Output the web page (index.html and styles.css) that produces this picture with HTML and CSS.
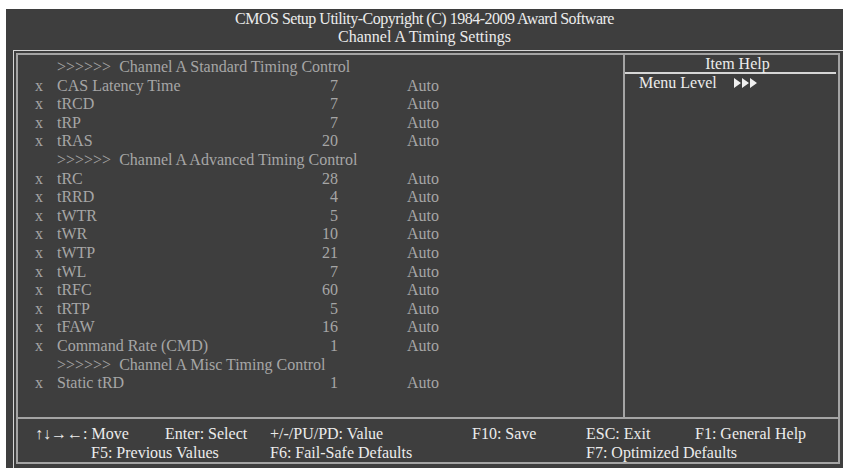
FILE: index.html
```html
<!DOCTYPE html>
<html lang="en">
<head>
    <meta charset="UTF-8">
    <title>Channel A Timing Settings</title>
    <link rel="stylesheet" href="styles.css">
</head>
<body>
    <div class="screen">
        <!-- Başlık -->
        <div class="title">
            <div class="copyright">CMOS Setup Utility-Copyright (C) 1984-2009 Award Software</div>
            <div>Channel A Timing Settings</div>
        </div>

        <div class="frame">
            <div class="box">
                <div class="main">
                    <div class="items">
                        <div class="group">&gt;&gt;&gt;&gt;&gt;&gt;  Channel A Standard Timing Control</div>
                        <span>x</span><span>CAS Latency Time</span><span class="val">7</span><span></span><span>Auto</span>
                        <span>x</span><span>tRCD</span><span class="val">7</span><span></span><span>Auto</span>
                        <span>x</span><span>tRP</span><span class="val">7</span><span></span><span>Auto</span>
                        <span>x</span><span>tRAS</span><span class="val">20</span><span></span><span>Auto</span>
                        <div class="group">&gt;&gt;&gt;&gt;&gt;&gt;  Channel A Advanced Timing Control</div>
                        <span>x</span><span>tRC</span><span class="val">28</span><span></span><span>Auto</span>
                        <span>x</span><span>tRRD</span><span class="val">4</span><span></span><span>Auto</span>
                        <span>x</span><span>tWTR</span><span class="val">5</span><span></span><span>Auto</span>
                        <span>x</span><span>tWR</span><span class="val">10</span><span></span><span>Auto</span>
                        <span>x</span><span>tWTP</span><span class="val">21</span><span></span><span>Auto</span>
                        <span>x</span><span>tWL</span><span class="val">7</span><span></span><span>Auto</span>
                        <span>x</span><span>tRFC</span><span class="val">60</span><span></span><span>Auto</span>
                        <span>x</span><span>tRTP</span><span class="val">5</span><span></span><span>Auto</span>
                        <span>x</span><span>tFAW</span><span class="val">16</span><span></span><span>Auto</span>
                        <span>x</span><span>Command Rate (CMD)</span><span class="val">1</span><span></span><span>Auto</span>
                        <div class="group">&gt;&gt;&gt;&gt;&gt;&gt;  Channel A Misc Timing Control</div>
                        <span>x</span><span>Static tRD</span><span class="val">1</span><span></span><span>Auto</span>
                    </div>
                    <div class="help">
                        <div class="help-title">Item Help</div>
                        <div class="menu-level">
                            Menu Level
                            <svg class="arrows" width="24" height="10" viewBox="0 0 24 10">
                                <path d="M0 0 L7 5 L0 10 Z M8 0 L15 5 L8 10 Z M16 0 L23 5 L16 10 Z" fill="#f0f0f0"/>
                            </svg>
                        </div>
                    </div>
                </div>

                <!-- Tuşlar -->
                <div class="keys">
                    <span>↑↓→←: Move</span>
                    <span>Enter: Select</span>
                    <span>+/-/PU/PD: Value</span>
                    <span>F10: Save</span>
                    <span>ESC: Exit</span>
                    <span>F1: General Help</span>
                    <span class="f5">F5: Previous Values</span>
                    <span class="f6">F6: Fail-Safe Defaults</span>
                    <span class="f7">F7: Optimized Defaults</span>
                </div>
            </div>
        </div>
    </div>
</body>
</html>
```

FILE: styles.css
```css
/* Genel Sıfırlama */
* {
    margin: 0;
    padding: 0;
    box-sizing: border-box;
}

body, html {
    font-family: "Liberation Serif", "Times New Roman", serif;
    font-size: 16px;
    background-color: #ffffff;
    height: 100%;
    overflow: hidden;
}

.screen {
    margin: 9px 0 0 6px;
    height: 459px;
    background-color: #3e3e3e;
    overflow: hidden;
}

.title {
    padding-top: 1px;
    line-height: 18px;
    text-align: center;
    color: #ececec;
}

.copyright {
    letter-spacing: -0.5px;
}

/* Çift çerçeve */
.frame {
    margin: 4px 0 0 7px;
    width: 900px;
    height: 500px;
    border-top: 1px solid #d6d6d6;
    border-left: 1px solid #d6d6d6;
    padding: 2px 0 0 2px;
}

.box {
    width: 824px;
    height: 411px;
    border: 2px solid #a4a4a4;
    display: flex;
    flex-direction: column;
}

.main {
    display: flex;
    height: 364px;
    border-bottom: 2px solid #a4a4a4;
}

.items {
    width: 605px;
    padding: 3px 0 0 17px;
    display: grid;
    grid-template-columns: 22px 251px 30px 69px 1fr;
    grid-auto-rows: 18.6px;
    align-content: start;
    line-height: 18.6px;
    color: #a6a6a6;
}

.items .group {
    grid-column: 2 / 6;
    white-space: pre;
}

.items .val {
    text-align: right;
}

.help {
    flex: 1;
    border-left: 2px solid #a4a4a4;
    color: #ececec;
}

.help-title {
    text-align: center;
    line-height: 17px;
    margin-right: 2px;
    padding-left: 14px;
    border-bottom: 2px solid #d6d6d6;
}

.menu-level {
    display: flex;
    align-items: center;
    line-height: 18px;
    padding-left: 14px;
}

.arrows {
    margin-left: 17px;
}

.keys {
    flex: 1;
    padding: 5px 0 0 17px;
    display: grid;
    grid-template-columns: 130px 105px 202px 114px 109px 1fr;
    grid-auto-rows: 19px;
    line-height: 19px;
    color: #ececec;
    white-space: nowrap;
}

.keys .f5 {
    grid-column: 1 / 3;
    padding-left: 56px;
}

.keys .f6 {
    grid-column: 3 / 5;
}

.keys .f7 {
    grid-column: 5 / 7;
}
```
